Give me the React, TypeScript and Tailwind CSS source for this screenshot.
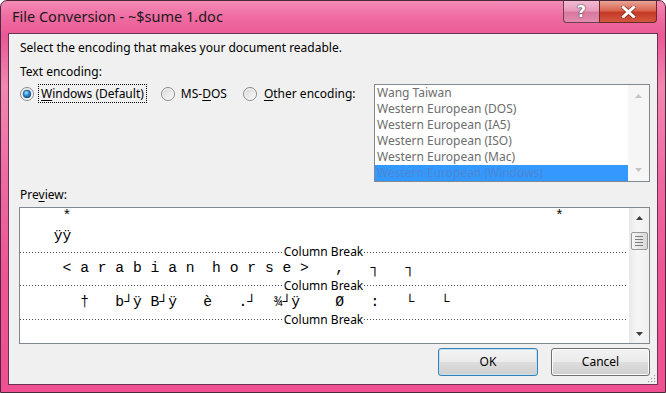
import React from "react";

const DOT =
  "h-px flex-1 bg-[repeating-linear-gradient(to_right,#4a4a4a_0px,#4a4a4a_1px,transparent_1px,transparent_3px)]";

function Radio({ checked }: { checked?: boolean }) {
  return (
    <svg width="14" height="14" viewBox="0 0 14 14" className="shrink-0">
      <defs>
        <linearGradient id={checked ? "rgc" : "rgu"} x1="0" y1="0" x2="1" y2="1">
          <stop offset="0" stopColor="#d4d4d4" />
          <stop offset="1" stopColor="#fdfdfd" />
        </linearGradient>
        <radialGradient id="rdot" cx="0.4" cy="0.35" r="0.75">
          <stop offset="0" stopColor="#a9e0fb" />
          <stop offset="0.45" stopColor="#2d8fd6" />
          <stop offset="1" stopColor="#0b3f78" />
        </radialGradient>
      </defs>
      <circle cx="7" cy="7" r="6.5" fill={checked ? "url(#rgc)" : "url(#rgu)"} stroke="#8b8b8b" />
      <circle cx="7" cy="7" r="5.3" fill="none" stroke="#f4f4f4" strokeWidth="0.8" />
      {checked && <circle cx="7" cy="7" r="3.9" fill="url(#rdot)" stroke="#1b4b7a" strokeWidth="0.6" />}
    </svg>
  );
}

function Tri({ up, color }: { up?: boolean; color: string }) {
  return (
    <svg width="7" height="4" viewBox="0 0 7 4">
      <path d={up ? "M3.5 0 L7 4 L0 4 Z" : "M0 0 L7 0 L3.5 4 Z"} fill={color} />
    </svg>
  );
}

function Break() {
  return (
    <div className="h-[17px] flex items-center pr-[2px]">
      <div className={DOT} />
      <span className="text-[12px] leading-[14px] px-[1px] text-black">Column Break</span>
      <div className={DOT} />
    </div>
  );
}

const items = [
  "Wang Taiwan",
  "Western European (DOS)",
  "Western European (IA5)",
  "Western European (ISO)",
  "Western European (Mac)",
  "Western European (Windows)",
];

const lineA = "  *" + " ".repeat(55) + "*";
const lineB = " ÿÿ";
const lineC = "  < a r a b i a n  h o r s e >   ,   ┐   ┐";
const lineD = "    †   b┘ÿ B┘ÿ   è   .┘  ¾┘ÿ    Ø   :   └   └";

export default function App() {
  return (
    <div className="relative w-[666px] h-[393px] overflow-hidden rounded-t-[7px] border border-[#4a2a3a] bg-[linear-gradient(180deg,#f48cb6_0%,#ef6ca2_4%,#eb5895_9%,#f287b3_22%,#ef6aa2_45%,#ee5595_70%,#ef5091_100%)] font-['Noto_Sans',sans-serif] text-black">
      {/* title bar */}
      <div className="h-[32px] flex justify-between">
        <div className="pl-[11px] flex items-center text-[14.5px] text-[#1a1a1a]">
          File Conversion - ~$sume 1.doc
        </div>
        <div className="flex mr-[8px] self-start">
          <div className="w-[36px] h-[22px] rounded-bl-[4px] border border-t-0 border-r-0 border-[#6d4050] bg-[linear-gradient(180deg,#f2bcd2_0%,#e99bbb_45%,#d9789f_55%,#e28cb0_100%)] flex items-center justify-center">
            <span className="text-[16px] font-bold leading-none text-white font-['DejaVu_Sans',sans-serif] [text-shadow:0_0_1px_#333,0_0_2px_#555]">?</span>
          </div>
          <div className="w-[58px] h-[22px] rounded-br-[4px] border border-t-0 border-[#6a2a28] bg-[linear-gradient(180deg,#e9a597_0%,#d8654f_45%,#c43a27_55%,#d2583f_100%)] flex items-center justify-center">
            <svg width="15" height="12" viewBox="0 0 15 12">
              <path d="M2.5 1.5 L12.5 10.5 M12.5 1.5 L2.5 10.5" stroke="#5d2020" strokeWidth="4.6" strokeLinecap="square" opacity="0.55" />
              <path d="M2.5 1.5 L12.5 10.5 M12.5 1.5 L2.5 10.5" stroke="#ffffff" strokeWidth="3" strokeLinecap="square" />
            </svg>
          </div>
        </div>
      </div>

      {/* client area */}
      <div className="relative mx-[7px] h-[352px] border border-[#6a3450] bg-[#f0f0f0] flex flex-col pl-[10px] pr-[7px] text-[12px]">
        <div className="mt-[6px] leading-[16px] pl-[1px]">Select the encoding that makes your document readable.</div>
        <div className="mt-[8px] leading-[16px] pl-[1px]">Text encoding:</div>

        <div className="mt-[4px] flex h-[98px]">
          <div className="flex items-center h-[19px] pl-[1px]">
            <Radio checked />
            <div className="ml-[4px] h-[19px] border border-dotted border-black pl-[2px] pr-[2px] flex items-center leading-[16px]">
              <span className="underline underline-offset-2">W</span>indows (Default)
            </div>
            <div className="ml-[14px]"><Radio /></div>
            <span className="ml-[6px] leading-[16px]">
              MS-<span className="underline underline-offset-2">D</span>OS
            </span>
            <div className="ml-[16px]"><Radio /></div>
            <span className="ml-[7px] leading-[16px]">
              <span className="underline underline-offset-2">O</span>ther encoding:
            </span>
          </div>
          <div className="ml-auto w-[276px] h-[98px] border border-[#828790] bg-white flex">
            <div className="flex-1 flex flex-col">
              {items.map((t, i) => (
                <div
                  key={t}
                  className={
                    i === 5
                      ? "h-[16px] leading-[16px] pl-[2px] bg-[#3399ff] text-[#4f86cf] whitespace-nowrap overflow-hidden"
                      : "h-[16px] leading-[16px] pl-[2px] text-[#6d6d6d] whitespace-nowrap"
                  }
                >
                  {t}
                </div>
              ))}
            </div>
            <div className="w-[21px] bg-[#f6f6f6] flex flex-col items-center justify-between pt-[9px] pb-[9px]">
              <Tri up color="#c4c4c4" />
              <Tri color="#c4c4c4" />
            </div>
          </div>
        </div>

        <div className="mt-[5px] leading-[16px] pl-[1px]">
          Pre<span className="underline underline-offset-2">v</span>iew:
        </div>

        <div className="mt-[4px] w-full h-[137px] border border-[#828790] bg-white flex">
          <div className="flex-1 flex flex-col overflow-hidden">
            <div className="h-[14px] leading-[16px] pl-[25px] font-['Liberation_Mono',monospace] text-[14.67px] whitespace-pre">{lineA}</div>
            <div className="h-[22px] flex items-end">
              <div className="leading-[16px] pl-[25px] font-['Liberation_Mono',monospace] text-[14.67px] whitespace-pre">{lineB}</div>
            </div>
            <div className="h-[16px] flex items-center pr-[2px]">
              <div className={DOT} />
              <span className="text-[12px] leading-[14px] px-[1px]">Column Break</span>
              <div className={DOT} />
            </div>
            <div className="h-[17px] leading-[17px] pl-[25px] font-['Liberation_Mono',monospace] text-[14.67px] whitespace-pre">{lineC}</div>
            <Break />
            <div className="h-[17px] leading-[17px] pl-[25px] font-['Liberation_Mono',monospace] text-[14.67px] whitespace-pre">{lineD}</div>
            <Break />
          </div>
          <div className="w-[20px] bg-[linear-gradient(to_right,#e9e9e9,#f5f5f5_40%,#f0f0f0)] flex flex-col items-center">
            <div className="h-[17px] flex items-center justify-center mt-[1px]">
              <Tri up color="#3d3d3d" />
            </div>
            <div className="mt-[6px] w-[17px] h-[18px] rounded-[2px] border border-[#979797] bg-[linear-gradient(to_right,#f7f7f7,#e3e3e3_60%,#d8d8d8)] flex flex-col items-center justify-center gap-[2px]">
              <div className="w-[8px] h-px bg-[#7d7d7d]" />
              <div className="w-[8px] h-px bg-[#7d7d7d]" />
              <div className="w-[8px] h-px bg-[#7d7d7d]" />
              <div className="w-[8px] h-px bg-[#7d7d7d]" />
            </div>
            <div className="flex-1" />
            <div className="h-[17px] flex items-center justify-center mb-[1px]">
              <Tri color="#3d3d3d" />
            </div>
          </div>
        </div>

        <div className="mt-[4px] flex justify-end gap-[13px]">
          <button className="w-[100px] h-[28px] rounded-[3px] border border-[#3c7fb1] shadow-[inset_0_0_0_1px_#b9e4f7] bg-[linear-gradient(180deg,#f4f4f4_0%,#ebebeb_48%,#dddddd_52%,#cfcfcf_100%)] text-[12px] text-black">
            OK
          </button>
          <button className="w-[99px] h-[28px] rounded-[3px] border border-[#707070] shadow-[inset_0_0_0_1px_#fcfcfc] bg-[linear-gradient(180deg,#f2f2f2_0%,#ebebeb_48%,#dddddd_52%,#cfcfcf_100%)] text-[12px] text-black">
            Cancel
          </button>
        </div>

        <svg className="absolute right-[1px] bottom-[1px]" width="10" height="10" viewBox="0 0 10 10">
          {[
            [8, 2], [8, 5], [5, 5], [8, 8], [5, 8], [2, 8],
          ].map(([x, y]) => (
            <g key={`${x}-${y}`}>
              <rect x={x + 0.6} y={y + 0.6} width="1.2" height="1.2" fill="#ffffff" />
              <rect x={x} y={y} width="1.2" height="1.2" fill="#a0a0a0" />
            </g>
          ))}
        </svg>
      </div>
    </div>
  );
}
